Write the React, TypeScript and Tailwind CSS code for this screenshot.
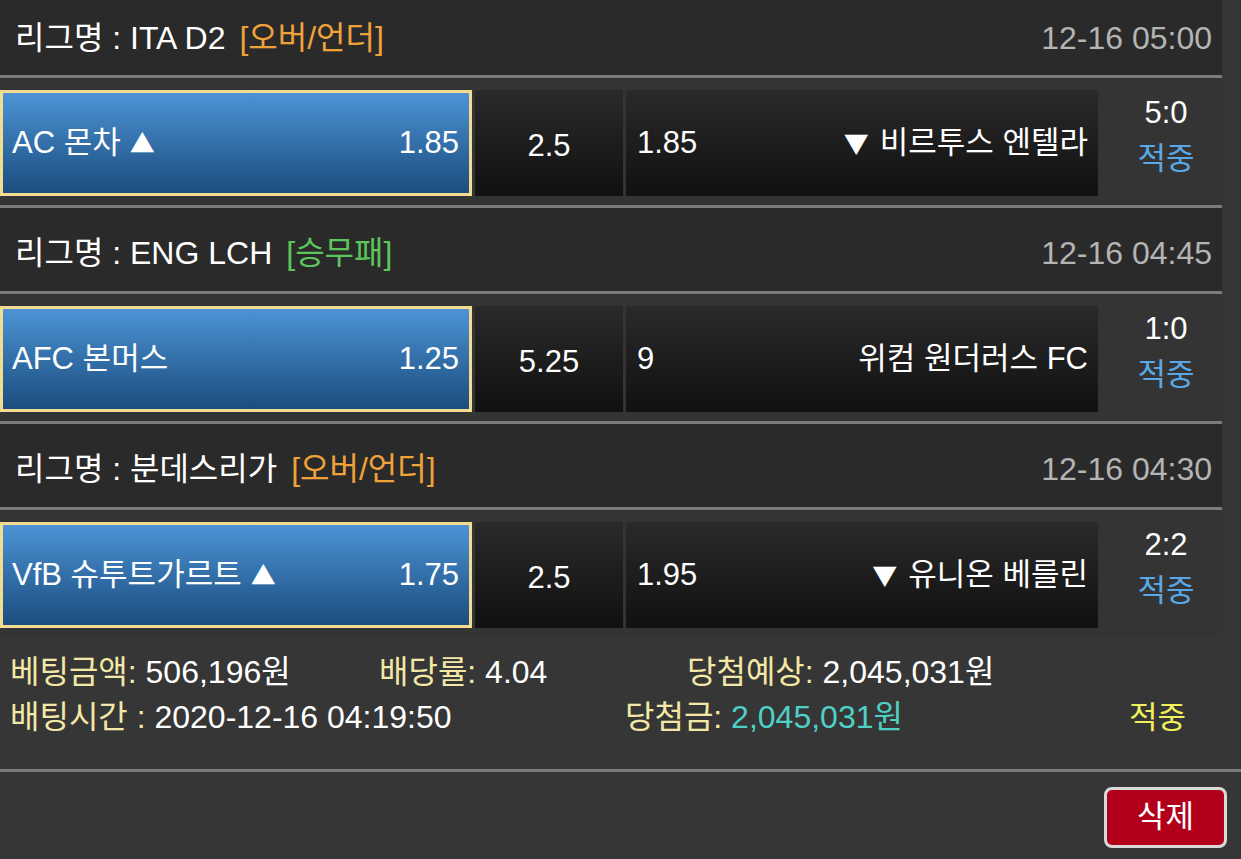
import React from "react";

const FONT = { fontFamily: '"Liberation Sans", "Noto Sans CJK KR", sans-serif' };
const ARROW = { fontFamily: '"Noto Sans CJK KR", sans-serif' };

type Match = {
  league: string;
  tag: string;
  tagColor: string;
  date: string;
  home: string;
  homeOdds: string;
  mid: string;
  awayOdds: string;
  away: string;
  score: string;
};

const matches: Match[] = [
  {
    league: "리그명 : ITA D2",
    tag: "[오버/언더]",
    tagColor: "text-[#f0a23a]",
    date: "12-16 05:00",
    home: "AC 몬차",
    homeOdds: "1.85",
    mid: "2.5",
    awayOdds: "1.85",
    away: "비르투스 엔텔라",
    score: "5:0",
  },
  {
    league: "리그명 : ENG LCH",
    tag: "[승무패]",
    tagColor: "text-[#5cc55c]",
    date: "12-16 04:45",
    home: "AFC 본머스",
    homeOdds: "1.25",
    mid: "5.25",
    awayOdds: "9",
    away: "위컴 원더러스 FC",
    score: "1:0",
  },
  {
    league: "리그명 : 분데스리가",
    tag: "[오버/언더]",
    tagColor: "text-[#f0a23a]",
    date: "12-16 04:30",
    home: "VfB 슈투트가르트",
    homeOdds: "1.75",
    mid: "2.5",
    awayOdds: "1.95",
    away: "유니온 베를린",
    score: "2:2",
  },
];

const arrows = [true, false, true];

function Line() {
  return <div className="h-[3px] bg-[#7b7b7b]" />;
}

function Header({ m, first }: { m: Match; first: boolean }) {
  return (
    <div
      className={`${first ? "h-[75px]" : "h-[83px] pt-[7px]"} bg-[#2a2a2a] flex items-center justify-between pl-[15px] pr-[10px]`}
    >
      <div className="text-[32px] text-white flex items-center gap-[14px]">
        <span>{m.league}</span>
        <span className={m.tagColor}>{m.tag}</span>
      </div>
      <div className="text-[32px] text-[#b4b4b4]">{m.date}</div>
    </div>
  );
}

function Row({ m, arrow }: { m: Match; arrow: boolean }) {
  return (
    <div className="h-[127px] bg-[#343434] flex items-start pt-[12px]">
      <div className="w-[472px] h-[106px] border-[3px] border-[#f2dc90] bg-gradient-to-b from-[#4c94d6] to-[#1b4d7f] flex items-center justify-between pl-[9px] pr-[10px] text-white text-[31px]">
        <span className="flex items-center">
          <span>{m.home}</span>
          {arrow && (
            <span className="text-[25px] ml-[9px]" style={ARROW}>
              ▲
            </span>
          )}
        </span>
        <span>{m.homeOdds}</span>
      </div>
      <div className="ml-[3px] w-[148px] h-[106px] bg-gradient-to-b from-[#2a2a2a] to-[#111111] flex items-center justify-center pt-[6px] text-white text-[31px]">
        {m.mid}
      </div>
      <div className="ml-[3px] w-[472px] h-[106px] bg-gradient-to-b from-[#2a2a2a] to-[#111111] flex items-center justify-between pl-[11px] pr-[10px] text-white text-[31px]">
        <span>{m.awayOdds}</span>
        <span className="flex items-center">
          {arrow && (
            <span className="text-[25px] mr-[11px]" style={ARROW}>
              ▼
            </span>
          )}
          <span>{m.away}</span>
        </span>
      </div>
      <div className="flex-1 h-[106px] flex flex-col items-center justify-start pl-[12px] text-[31px] leading-[46px]">
        <span className="text-white">{m.score}</span>
        <span className="text-[#5aa9e6]">적중</span>
      </div>
    </div>
  );
}

export default function App() {
  return (
    <div className="w-[1241px] h-[859px] bg-[#363636] overflow-hidden" style={FONT}>
      <div className="w-[1222px]">
        {matches.map((m, i) => (
          <div key={i}>
            {i > 0 && <Line />}
            <Header m={m} first={i === 0} />
            <Line />
            <Row m={m} arrow={arrows[i]} />
          </div>
        ))}
      </div>
      <div className="pt-[13px] pb-[29px] text-[32px] leading-[45px]">
        <div className="flex pl-[10px]">
          <div className="w-[369px]">
            <span className="text-[#f3e8a6]">베팅금액: </span>
            <span className="text-white">506,196원</span>
          </div>
          <div className="w-[308px]">
            <span className="text-[#f3e8a6]">배당률: </span>
            <span className="text-white">4.04</span>
          </div>
          <div>
            <span className="text-[#f3e8a6]">당첨예상: </span>
            <span className="text-white">2,045,031원</span>
          </div>
        </div>
        <div className="flex pl-[10px]">
          <div className="w-[615px]">
            <span className="text-[#f3e8a6]">배팅시간 : </span>
            <span className="text-white">2020-12-16 04:19:50</span>
          </div>
          <div className="w-[504px]">
            <span className="text-[#f3e8a6]">당첨금: </span>
            <span className="text-[#4fd0c6]">2,045,031원</span>
          </div>
          <div className="text-[#f2ef5c] text-[31px]">적중</div>
        </div>
      </div>
      <div className="h-[3px] bg-[#7b7b7b]" />
      <div className="flex justify-end pt-[15px] pr-[14px]">
        <button className="w-[123px] h-[61px] rounded-[8px] border-[3px] border-[#d9d9d9] bg-[#b2001b] text-white text-[31px] flex items-center justify-center">
          삭제
        </button>
      </div>
    </div>
  );
}
